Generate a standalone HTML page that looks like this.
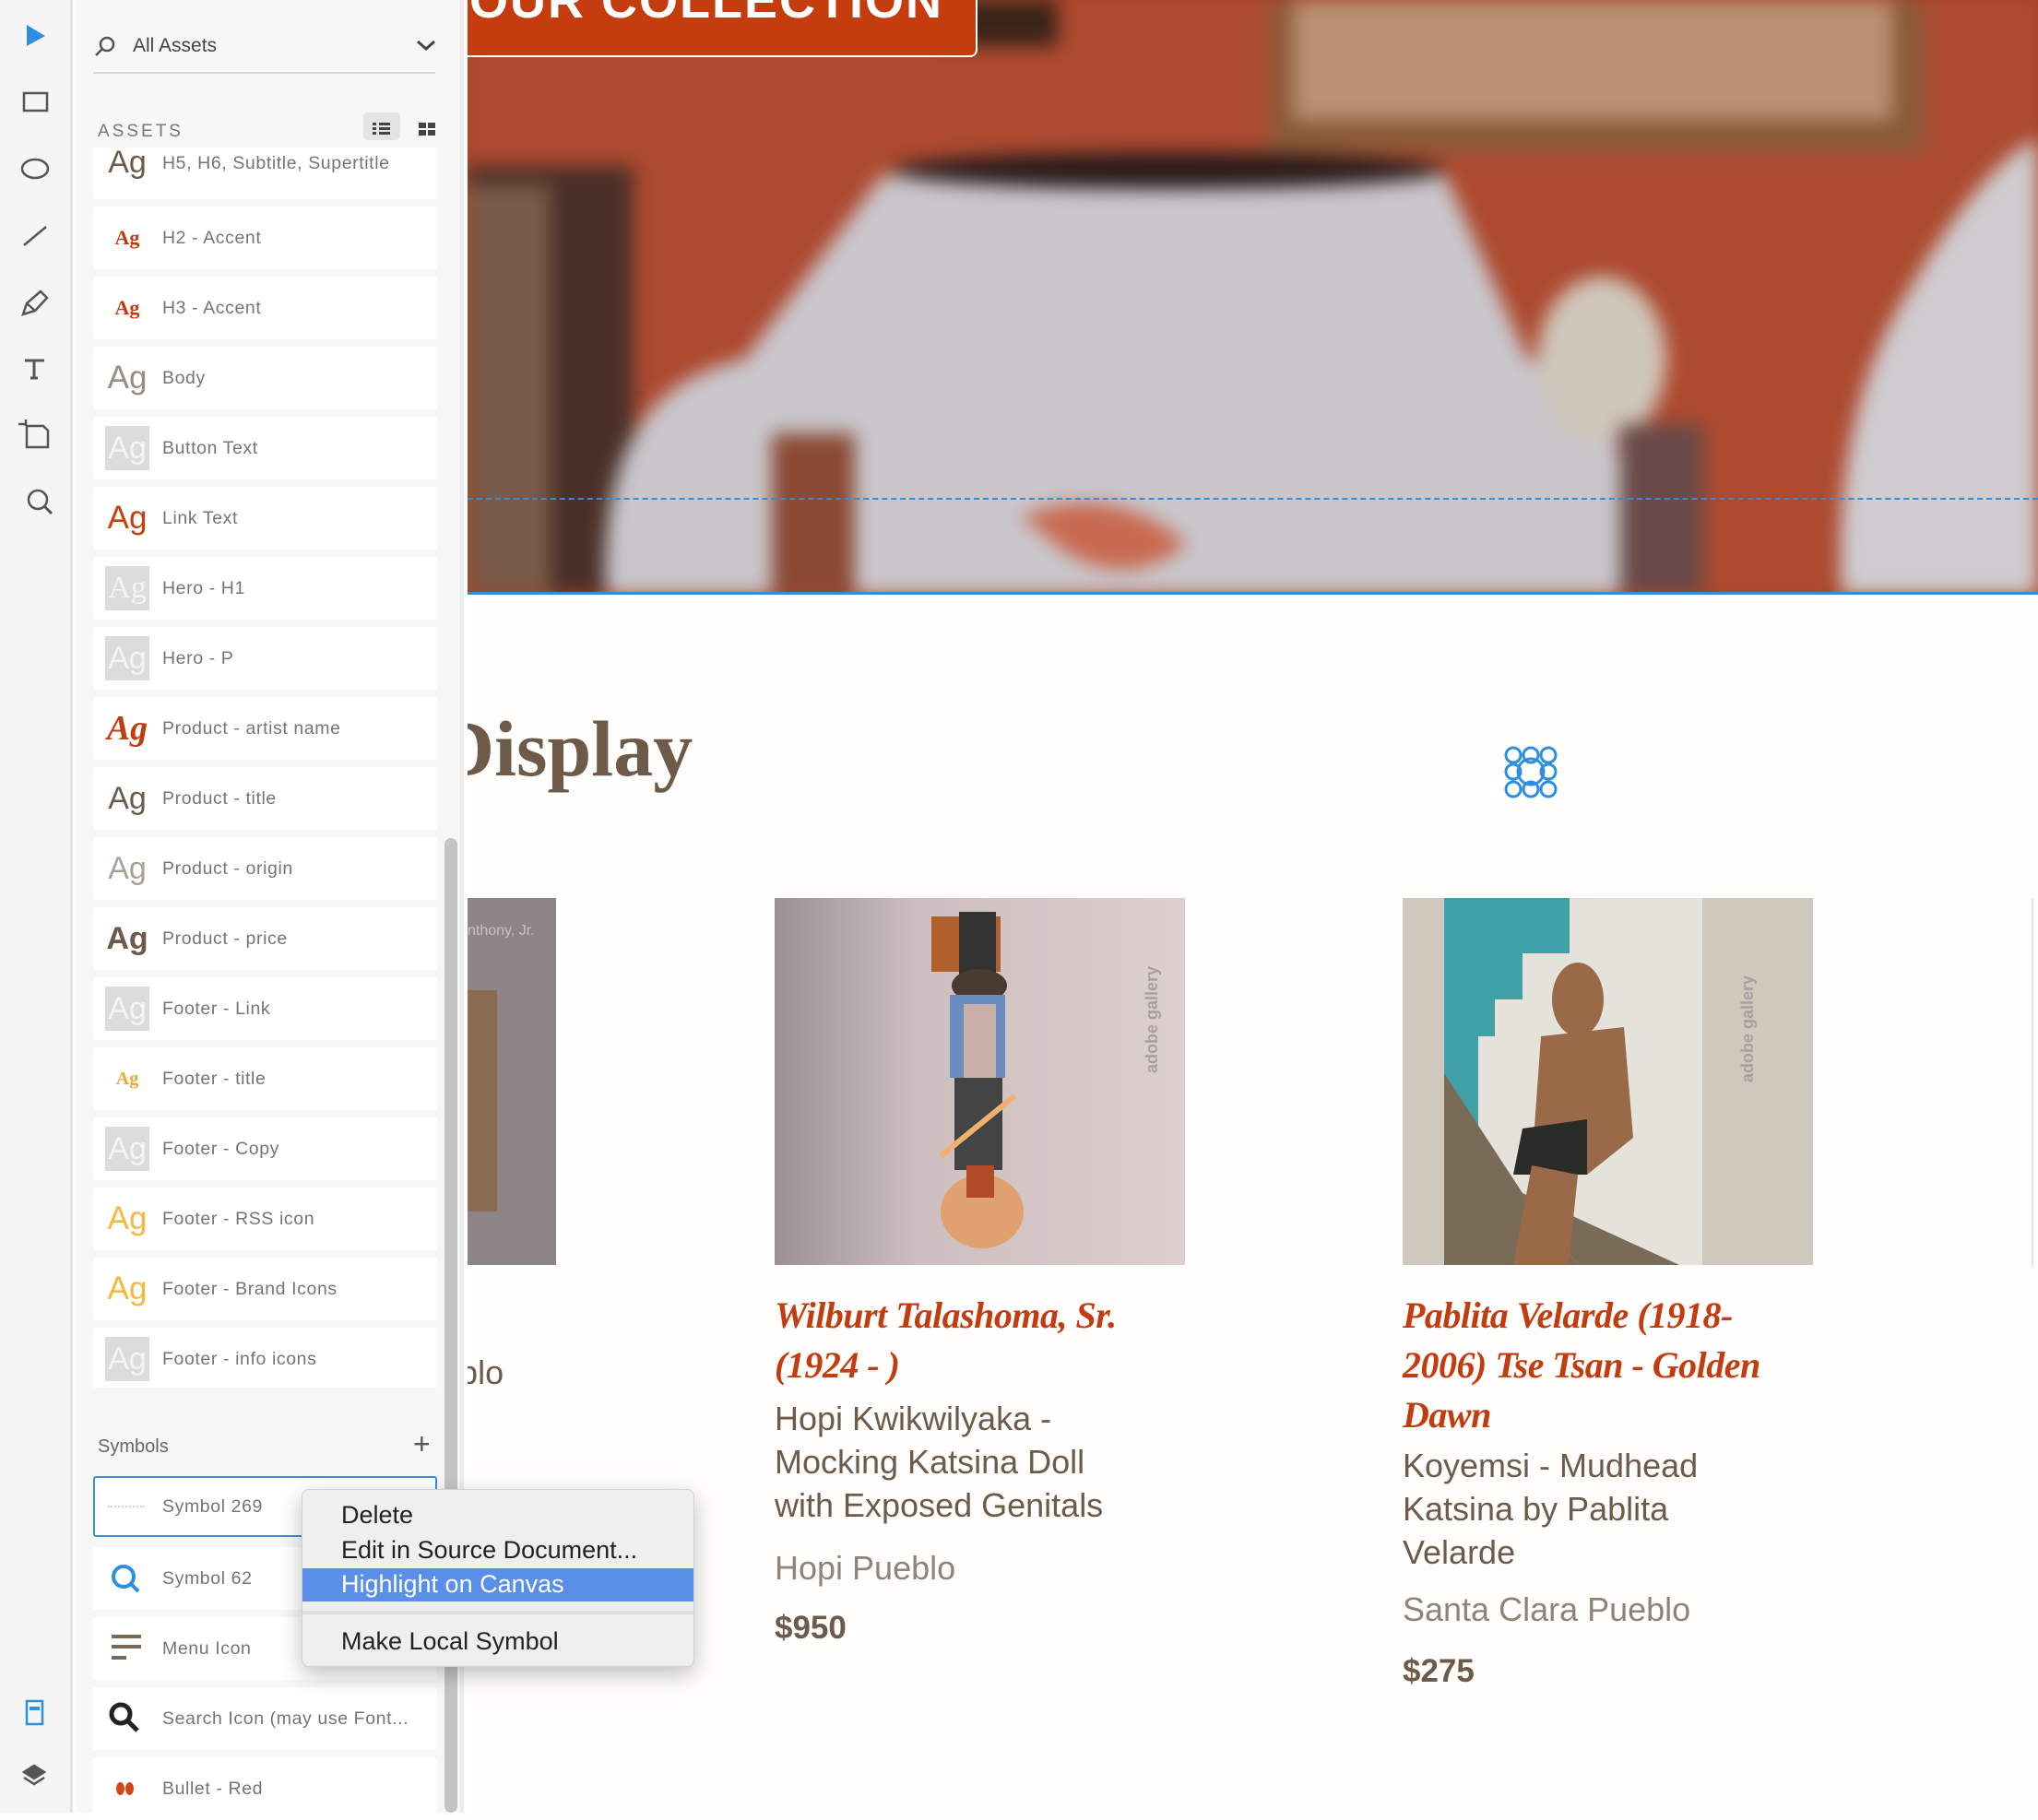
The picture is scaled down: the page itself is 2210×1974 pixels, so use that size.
<!DOCTYPE html>
<html><head><meta charset="utf-8"><style>
*{margin:0;padding:0;box-sizing:border-box}
body{width:2210px;height:1966px;overflow:hidden;position:relative;background:#fffefc;font-family:"Liberation Sans",sans-serif}
.a{position:absolute}
.row{position:absolute;left:101px;width:373px;height:68px;background:#fff;border-radius:3px}
.lbl{position:absolute;left:75px;top:0;line-height:68px;font-size:19.5px;color:#757575;letter-spacing:0.6px;white-space:nowrap}
.ag{position:absolute;left:13px;top:10px;width:48px;height:48px;line-height:48px;text-align:center;white-space:nowrap}
.gb{background:#dcdcdc;color:#f4f4f4;font-size:34px}
.menu div{position:absolute;left:42px;font-size:27px;color:#222;white-space:nowrap}
.serif{font-family:"Liberation Serif",serif}
.art{font-family:"Liberation Serif",serif;font-style:italic;font-weight:bold;color:#c23c10;font-size:40px;line-height:54px;letter-spacing:-0.5px}
.tit{color:#6d5a49;font-size:36px;line-height:47px}
.ori{color:#8f8378;font-size:36px}
.pri{color:#6d5a49;font-size:35px;font-weight:bold}
</style></head><body>

<!-- canvas hero -->
<div class="a" style="left:507px;top:0;width:1703px;height:645px;overflow:hidden;background:#a8442c">
<svg width="1703" height="645" style="position:absolute;left:0;top:0;filter:blur(10px)">
<rect x="0" y="0" width="1703" height="645" fill="#ad4a30"/>
<rect x="0" y="180" width="180" height="465" fill="#4a3028"/>
<rect x="0" y="200" width="90" height="445" fill="#7a5a48"/>
<rect x="870" y="0" width="710" height="165" fill="#8a5a38"/>
<rect x="895" y="0" width="650" height="130" fill="#b89072"/>
<rect x="520" y="0" width="120" height="50" fill="#3a2418"/>
<path d="M450,190 L1060,190 L1150,390 Q1250,420 1300,645 L150,645 Q140,420 300,390 Z" fill="#c9c6cb"/>
<ellipse cx="760" cy="185" rx="300" ry="20" fill="#2a1c1c"/>
<ellipse cx="1230" cy="390" rx="70" ry="90" fill="#cfc6ba"/>
<path d="M1560,320 Q1640,180 1703,150 L1703,645 L1490,645 Q1480,450 1560,320Z" fill="#cfcdd0"/>
<rect x="330" y="470" width="90" height="175" fill="#8a4a34"/>
<rect x="1250" y="460" width="90" height="185" fill="#6a4a48"/>
<path d="M600,560 Q700,520 780,590 Q720,640 650,600Z" fill="#c86a50"/>
</svg>
<div class="a" style="left:0;top:540px;width:1703px;border-top:2px dashed #2d8fe0"></div>
<div class="a" style="left:0;top:642px;width:1703px;height:3px;background:#2d8fe0"></div>
<div class="a" style="left:0;top:0;width:553px;height:62px;background:#c53c0e;border:2px solid #fff;border-top:none;border-left:none;border-radius:0 0 8px 0;overflow:hidden">
<div class="a" style="left:2px;top:-30px;color:#fff;font-size:54px;font-weight:bold;letter-spacing:2px;white-space:nowrap">OUR COLLECTION</div></div>
</div>

<!-- heading -->
<div class="a serif" style="left:474px;top:762px;font-size:86px;font-weight:bold;color:#6d5a49;white-space:nowrap;clip-path:inset(0 0 0 33px)">Display</div>
<svg class="a" style="left:1625px;top:802px" width="70" height="70" fill="none" stroke="#2d8fe0" stroke-width="3">
<circle cx="35" cy="35" r="14"/><circle cx="16" cy="17" r="8"/><circle cx="35" cy="17" r="8"/><circle cx="54" cy="17" r="8"/><circle cx="16" cy="35" r="8"/><circle cx="54" cy="35" r="8"/><circle cx="16" cy="54" r="8"/><circle cx="35" cy="54" r="8"/><circle cx="54" cy="54" r="8"/></svg>

<!-- product images -->
<svg class="a" style="left:507px;top:974px" width="96" height="398"><rect width="96" height="398" fill="#8c8486"/><rect x="0" y="100" width="32" height="240" fill="#8a6a50"/><text x="0" y="40" font-size="16" fill="#c8c0c0" font-family="Liberation Sans">nthony, Jr.</text></svg>
<svg class="a" style="left:840px;top:974px" width="445" height="398">
<defs><linearGradient id="g1" x1="0" x2="1"><stop offset="0" stop-color="#9d9092"/><stop offset="0.35" stop-color="#cdbfbf"/><stop offset="1" stop-color="#dccfce"/></linearGradient></defs>
<rect width="445" height="398" fill="url(#g1)"/>
<rect x="170" y="20" width="75" height="60" fill="#b0602c"/>
<rect x="200" y="15" width="40" height="70" fill="#333"/>
<ellipse cx="222" cy="95" rx="30" ry="18" fill="#4a3a30"/>
<rect x="190" y="105" width="60" height="90" fill="#6a8cc0"/>
<rect x="205" y="115" width="35" height="90" fill="#c8b0a8"/>
<rect x="195" y="195" width="52" height="100" fill="#444"/>
<line x1="180" y1="280" x2="260" y2="215" stroke="#f0b070" stroke-width="6"/>
<ellipse cx="225" cy="340" rx="45" ry="40" fill="#e0a070"/>
<rect x="208" y="290" width="30" height="35" fill="#b04a28"/>
<text x="0" y="0" transform="translate(415,190) rotate(-90)" font-size="18" fill="#a8a0a0" font-family="Liberation Sans" font-weight="bold">adobe gallery</text>
</svg>
<svg class="a" style="left:1521px;top:974px" width="445" height="398">
<rect width="445" height="398" fill="#cfc8bc"/>
<rect x="45" y="0" width="280" height="398" fill="#e4e2da"/>
<polygon points="45,0 181,0 181,60 130,60 130,110 100,110 100,150 82,150 82,260 90,300 45,260" fill="#3fa0a8"/>
<polygon points="45,190 130,320 190,398 45,398" fill="#7a6a58"/>
<polygon points="130,320 300,398 190,398" fill="#7a6a58"/>
<ellipse cx="190" cy="110" rx="28" ry="40" fill="#9a6a48"/>
<polygon points="150,150 240,140 250,260 200,300 140,290" fill="#9a6a48"/>
<polygon points="130,250 200,240 200,300 120,300" fill="#2a2a26"/>
<polygon points="140,290 190,300 180,398 120,398" fill="#9a6a48"/>
<text x="0" y="0" transform="translate(380,200) rotate(-90)" font-size="18" fill="#a8a0a0" font-family="Liberation Sans" font-weight="bold">adobe gallery</text>
</svg>
<div class="a" style="left:2203px;top:974px;width:2px;height:400px;background:#e6e2dc"></div>

<!-- product text -->
<div class="a tit" style="left:434px;top:1465px;clip-path:inset(0 0 0 73px)">Pueblo</div>
<div class="a" style="left:840px;top:1400px;width:460px">
<div class="art">Wilburt Talashoma, Sr.<br>(1924 - )</div>
<div class="tit" style="margin-top:7px">Hopi Kwikwilyaka -<br>Mocking Katsina Doll<br>with Exposed Genitals</div>
<div class="ori" style="margin-top:24px">Hopi Pueblo</div>
<div class="pri" style="margin-top:24px">$950</div>
</div>
<div class="a" style="left:1521px;top:1400px;width:460px">
<div class="art">Pablita Velarde (1918-<br>2006) Tse Tsan - Golden<br>Dawn</div>
<div class="tit" style="margin-top:4px">Koyemsi - Mudhead<br>Katsina by Pablita<br>Velarde</div>
<div class="ori" style="margin-top:18px">Santa Clara Pueblo</div>
<div class="pri" style="margin-top:26px">$275</div>
</div>

<!-- toolbar -->
<div class="a" style="left:0;top:0;width:79px;height:1966px;background:#f5f5f5;border-right:3px solid #e4e4e4"></div>
<svg class="a" style="left:0;top:0" width="79" height="1966" fill="none" stroke="#555" stroke-width="2.5">
<polygon points="29,27 49,39 29,50" fill="#2d8fe0" stroke="none"/>
<rect x="26" y="101" width="25" height="19"/>
<ellipse cx="38" cy="183" rx="14" ry="10"/>
<line x1="26" y1="266" x2="50" y2="246"/>
<path d="M25 341 L29 329 L44 316 L51 323 L38 337 Z M29 329 L38 337"/>
<path d="M27 391 H48 M37 391 V410 M33 410 H41" stroke-width="3"/>
<path d="M29 462 V485 H52 V467 L47 462 Z M20 460 H28 M28 455 V462"/>
<circle cx="41" cy="542" r="10"/><line x1="48" y1="549" x2="56" y2="557" stroke-width="3"/>
<rect x="18" y="1845" width="17" height="25" stroke="#2d8fe0" transform="translate(11,0)"/><rect x="32" y="1851" width="11" height="4" fill="#2d8fe0" stroke="none"/>
<path d="M37 1915 L48 1922 L37 1929 L26 1922 Z" fill="#555"/><path d="M26 1928 L37 1935 L48 1928"/>
</svg>

<!-- panel -->
<div class="a" style="left:82px;top:0;width:421px;height:1966px;background:#f7f7f7;border-right:4px solid #ececec"></div>
<svg class="a" style="left:100px;top:37px" width="30" height="30" fill="none" stroke="#555" stroke-width="2.5"><circle cx="16" cy="11" r="7"/><line x1="11" y1="16" x2="4" y2="23"/></svg>
<div class="a" style="left:144px;top:38px;font-size:21px;color:#444">All Assets</div>
<svg class="a" style="left:450px;top:42px" width="24" height="16" fill="none" stroke="#444" stroke-width="3"><path d="M3 3 L12 11 L21 3"/></svg>
<div class="a" style="left:101px;top:78px;width:371px;height:2px;background:#d8d8d8"></div>
<div class="a" style="left:106px;top:132px;font-size:19px;color:#777;letter-spacing:3px">ASSETS</div>
<div class="a" style="left:394px;top:122px;width:40px;height:30px;background:#e4e4e4;border-radius:5px"></div>
<svg class="a" style="left:402px;top:126px" width="80" height="24" fill="#444"><rect x="2" y="7" width="4" height="3"/><rect x="9" y="7" width="12" height="3"/><rect x="2" y="12" width="4" height="3"/><rect x="9" y="12" width="12" height="3"/><rect x="2" y="17" width="4" height="3"/><rect x="9" y="17" width="12" height="3"/>
<rect x="52" y="7" width="8" height="6"/><rect x="62" y="7" width="8" height="6"/><rect x="52" y="15" width="8" height="6"/><rect x="62" y="15" width="8" height="6"/></svg>

<div class="a" style="left:0;top:160px;width:500px;height:1345px;overflow:hidden">
<div class="row" style="top:-12px"><div class="ag" style="color:#6d5a49;font-size:34px;top:4px">Ag</div><div class="lbl" style="line-height:58px">H5, H6, Subtitle, Supertitle</div></div>
<div class="row" style="top:64px"><div class="ag serif" style="color:#c23c10;font-size:22px;font-weight:bold">Ag</div><div class="lbl">H2 - Accent</div></div>
<div class="row" style="top:140px"><div class="ag serif" style="color:#c23c10;font-size:22px;font-weight:bold">Ag</div><div class="lbl">H3 - Accent</div></div>
<div class="row" style="top:216px"><div class="ag" style="color:#9a8c80;font-size:35px">Ag</div><div class="lbl">Body</div></div>
<div class="row" style="top:292px"><div class="ag gb">Ag</div><div class="lbl">Button Text</div></div>
<div class="row" style="top:368px"><div class="ag" style="color:#c8400e;font-size:35px">Ag</div><div class="lbl">Link Text</div></div>
<div class="row" style="top:444px"><div class="ag gb serif">Ag</div><div class="lbl">Hero - H1</div></div>
<div class="row" style="top:520px"><div class="ag gb">Ag</div><div class="lbl">Hero - P</div></div>
<div class="row" style="top:596px"><div class="ag serif" style="color:#c23c10;font-size:38px;font-style:italic;font-weight:bold">Ag</div><div class="lbl">Product - artist name</div></div>
<div class="row" style="top:672px"><div class="ag" style="color:#6d5a49;font-size:34px">Ag</div><div class="lbl">Product - title</div></div>
<div class="row" style="top:748px"><div class="ag" style="color:#aaa098;font-size:34px">Ag</div><div class="lbl">Product - origin</div></div>
<div class="row" style="top:824px"><div class="ag" style="color:#6d5a49;font-size:34px;font-weight:bold">Ag</div><div class="lbl">Product - price</div></div>
<div class="row" style="top:900px"><div class="ag gb">Ag</div><div class="lbl">Footer - Link</div></div>
<div class="row" style="top:976px"><div class="ag serif" style="color:#f0a830;font-size:20px;font-weight:bold">Ag</div><div class="lbl">Footer - title</div></div>
<div class="row" style="top:1052px"><div class="ag gb">Ag</div><div class="lbl">Footer - Copy</div></div>
<div class="row" style="top:1128px"><div class="ag" style="color:#f5b840;font-size:35px">Ag</div><div class="lbl">Footer - RSS icon</div></div>
<div class="row" style="top:1204px"><div class="ag" style="color:#f5b840;font-size:35px">Ag</div><div class="lbl">Footer - Brand Icons</div></div>
<div class="row" style="top:1280px"><div class="ag gb">Ag</div><div class="lbl">Footer - info icons</div></div>
</div>

<div class="a" style="left:106px;top:1558px;font-size:20px;color:#666">Symbols</div>
<div class="a" style="left:448px;top:1548px;font-size:32px;color:#555;font-weight:300">+</div>
<div class="row" style="top:1601px;height:66px;border:2px solid #3d8ee0"><div class="lbl" style="line-height:62px;left:73px">Symbol 269</div><div class="a" style="left:14px;top:30px;width:40px;border-top:2px dotted #bcd8f4"></div></div>
<div class="row" style="top:1678px"><svg class="a" style="left:18px;top:17px" width="36" height="36" fill="none" stroke="#2d8fe0" stroke-width="4"><circle cx="15" cy="15" r="11"/><line x1="23" y1="23" x2="31" y2="31"/></svg><div class="lbl">Symbol 62</div></div>
<div class="row" style="top:1754px"><div class="a" style="left:20px;top:19px;width:32px;height:4px;background:#776858"></div><div class="a" style="left:20px;top:30px;width:32px;height:4px;background:#776858"></div><div class="a" style="left:20px;top:42px;width:16px;height:4px;background:#776858"></div><div class="lbl">Menu Icon</div></div>
<div class="row" style="top:1830px"><svg class="a" style="left:16px;top:15px" width="40" height="40" fill="none" stroke="#222" stroke-width="5"><circle cx="14" cy="14" r="10"/><line x1="21" y1="21" x2="32" y2="32"/></svg><div class="lbl">Search Icon (may use Font...</div></div>
<div class="row" style="top:1906px"><div class="a" style="left:25px;top:27px;width:9px;height:14px;border-radius:50%;background:#d4441a"></div><div class="a" style="left:35px;top:27px;width:9px;height:14px;border-radius:50%;background:#d4441a"></div><div class="lbl">Bullet - Red</div></div>

<div class="a" style="left:482px;top:909px;width:14px;height:1057px;background:#c4c4c4;border-radius:7px"></div>

<!-- context menu -->
<div class="a menu" style="left:327px;top:1615px;width:426px;height:193px;background:#efefef;border:1px solid #d0d0d0;border-radius:8px;box-shadow:0 8px 24px rgba(0,0,0,.25)">
<div style="top:12px">Delete</div>
<div style="top:50px">Edit in Source Document...</div>
<div class="a" style="left:0;top:85px;width:424px;height:36px;background:#5a8fe8"></div>
<div style="top:87px;color:#fff">Highlight on Canvas</div>
<div class="a" style="left:0;top:131px;width:424px;height:4px;background:#dedede"></div>
<div style="top:149px">Make Local Symbol</div>
</div>
</body></html>
